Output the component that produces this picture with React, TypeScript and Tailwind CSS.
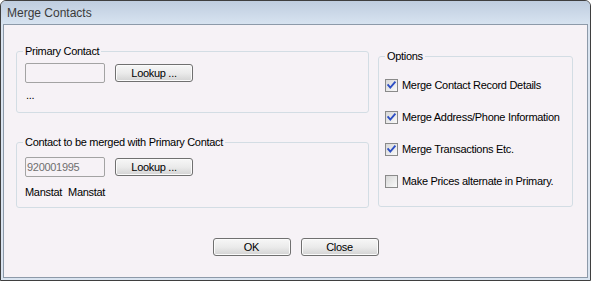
function CheckBox({ checked }: { checked: boolean }) {
  return (
    <svg width="13" height="13" viewBox="0 0 13 13" className="shrink-0">
      <defs>
        <linearGradient id={checked ? "cbg1" : "cbg0"} x1="0" y1="0" x2="1" y2="1">
          <stop offset="0" stopColor="#d6d6d6" />
          <stop offset="1" stopColor="#fbfbfb" />
        </linearGradient>
      </defs>
      <rect x="0.5" y="0.5" width="12" height="12" fill={`url(#${checked ? "cbg1" : "cbg0"})`} stroke="#8a8a8a" />
      {checked && (
        <path d="M3.2 6.2 L5.3 8.6 L9.8 3.4" fill="none" stroke="#2e4fc4" strokeWidth="1.9" strokeLinecap="square" />
      )}
    </svg>
  )
}

function WinButton({ label }: { label: string }) {
  return (
    <button className="w-[78px] h-[18px] border border-[#707070] rounded-[3px] bg-gradient-to-b from-[#f7f7f7] via-[#ebebeb] to-[#d3d3d3] shadow-[inset_0_0_0_1px_#fbfbfb] text-[11px] leading-none text-black">
      {label}
    </button>
  )
}

function Option({ label, checked }: { label: string; checked: boolean }) {
  return (
    <label className="flex items-center gap-[4px] h-[13px] text-[11px] leading-[13px] text-black">
      <CheckBox checked={checked} />
      <span>{label}</span>
    </label>
  )
}

export default function App() {
  return (
    <div className="w-[591px] h-[281px] flex flex-col bg-[#dae4f0] border border-[#3f3f3f] rounded-t-[6px] overflow-hidden font-['Liberation_Sans',Arial,sans-serif] tracking-[-0.3px]">
      <div className="h-[23px] shrink-0 flex items-center pl-[6px] bg-gradient-to-b from-[#bfcddf] to-[#d7e3f0] text-[12px] text-[#3a3a3a] tracking-normal">
        Merge Contacts
      </div>
      <div className="flex-1 mx-[2px] mb-[2px] border border-[#8d9aa9] bg-[#f6f2f6] flex flex-col">
        <div className="flex gap-[9px] pl-[12px] pt-[20px]">
          <div className="w-[353px] flex flex-col">
            <fieldset className="h-[68px] border border-[#d3dde4] rounded-[3px] px-[6px]">
              <legend className="px-[2px] text-[11px] leading-[13px]">Primary Contact</legend>
              <div className="pl-[2px] pt-[5px]">
                <div className="flex items-center gap-[10px]">
                  <div className="w-[80px] h-[20px] border border-[#a3a3a3] rounded-[2px] bg-[#f6f2f6]" />
                  <WinButton label="Lookup ..." />
                </div>
                <div className="mt-[6px] pl-[1px] text-[11px] leading-[13px]">...</div>
              </div>
            </fieldset>
            <fieldset className="mt-[23px] h-[72px] border border-[#d3dde4] rounded-[3px] px-[6px]">
              <legend className="px-[2px] text-[11px] leading-[13px]">Contact to be merged with Primary Contact</legend>
              <div className="pl-[2px] pt-[8px]">
                <div className="flex items-center gap-[10px]">
                  <div className="w-[80px] h-[20px] border border-[#a3a3a3] rounded-[2px] bg-[#f6f2f6] flex items-center pl-[1px] text-[11px] text-[#6f6f6f]">
                    920001995
                  </div>
                  <WinButton label="Lookup ..." />
                </div>
                <div className="mt-[9px] flex gap-[6px] text-[11px] leading-[13px]">
                  <span>Manstat</span>
                  <span>Manstat</span>
                </div>
              </div>
            </fieldset>
          </div>
          <fieldset className="mt-[5px] w-[195px] h-[157px] border border-[#d3dde4] rounded-[3px] px-[6px]">
            <legend className="px-[2px] text-[11px] leading-[13px]">Options</legend>
            <div className="pt-[16px] flex flex-col gap-[19px]">
              <Option label="Merge Contact Record Details" checked />
              <Option label="Merge Address/Phone Information" checked />
              <Option label="Merge Transactions Etc." checked />
              <Option label="Make Prices alternate in Primary." checked={false} />
            </div>
          </fieldset>
        </div>
        <div className="mt-[30px] flex justify-center gap-[10px]">
          <WinButton label="OK" />
          <WinButton label="Close" />
        </div>
      </div>
    </div>
  )
}
